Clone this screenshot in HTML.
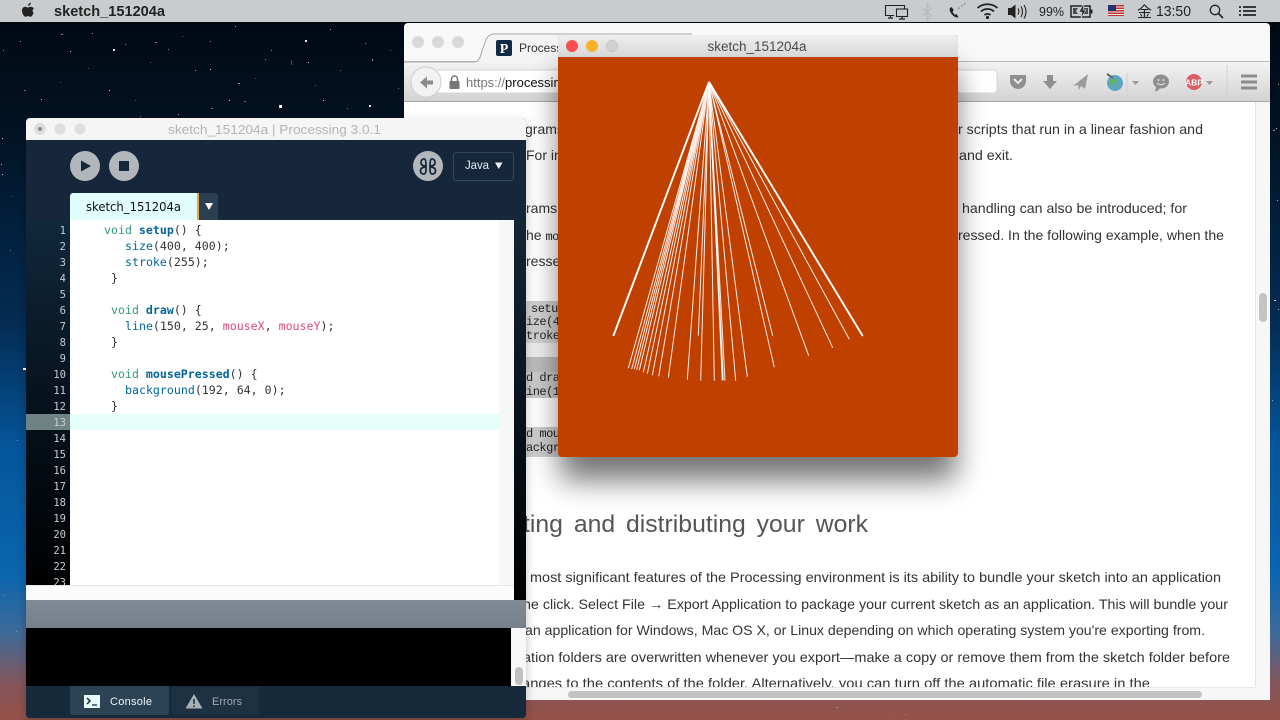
<!DOCTYPE html>
<html><head><meta charset="utf-8"><title>sketch_151204a</title>
<style>
html,body{margin:0;padding:0;width:1280px;height:720px;overflow:hidden;background:#000}
svg{display:block;position:absolute;left:0;top:0}
.s{font-family:"Liberation Sans",sans-serif}
.c{font-family:"DejaVu Sans Mono","Liberation Mono",monospace;font-size:11.6px}
.b{font-family:"Liberation Sans",sans-serif;font-size:14px;fill:#333}
.m{font-family:"Liberation Mono",monospace;font-size:12px;letter-spacing:-.5px;fill:#222}
.n{font-family:"DejaVu Sans Mono",monospace;font-size:10.5px;fill:#c8ccd0;text-anchor:end}
</style></head><body>
<svg width="1280" height="720" viewBox="0 0 1280 720" xmlns="http://www.w3.org/2000/svg">
<defs>
<linearGradient id="bg" x1="0" y1="0" x2="0" y2="1">
<stop offset="0" stop-color="#010710"/><stop offset=".17" stop-color="#021222"/><stop offset=".45" stop-color="#042c54"/><stop offset=".62" stop-color="#05559a"/><stop offset=".8" stop-color="#0b66ae"/><stop offset=".88" stop-color="#3f6a98"/><stop offset=".95" stop-color="#85555c"/><stop offset="1" stop-color="#965247"/>
</linearGradient>
<linearGradient id="tb" x1="0" y1="0" x2="0" y2="1"><stop offset="0" stop-color="#f0f0f0"/><stop offset="1" stop-color="#d6d6d6"/></linearGradient>
<linearGradient id="bt" x1="0" y1="0" x2="0" y2="1"><stop offset="0" stop-color="#f4f4f4"/><stop offset="1" stop-color="#d2d2d2"/></linearGradient>
<linearGradient id="gut" x1="0" y1="0" x2="0" y2="1"><stop offset="0" stop-color="#10283c"/><stop offset=".45" stop-color="#071420"/><stop offset="1" stop-color="#000"/></linearGradient>
<linearGradient id="rs" x1="0" y1="0" x2="0" y2="1"><stop offset="0" stop-color="#122637"/><stop offset="1" stop-color="#000"/></linearGradient>
<linearGradient id="gb" x1="0" y1="0" x2="0" y2="1"><stop offset="0" stop-color="#7f8a94"/><stop offset="1" stop-color="#75808a"/></linearGradient>
<filter id="sb" filterUnits="userSpaceOnUse" x="460" y="0" width="600" height="600"><feGaussianBlur stdDeviation="15"/></filter>
<filter id="sh2" x="-10%" y="-10%" width="120%" height="120%"><feDropShadow dx="0" dy="4" stdDeviation="5" flood-color="#000" flood-opacity=".25"/></filter>
<clipPath id="ed"><rect x="26" y="220" width="473" height="365"/></clipPath>
<clipPath id="bc"><rect x="404" y="102" width="851" height="585"/></clipPath>
</defs>

<!-- desktop -->
<rect width="1280" height="720" fill="url(#bg)"/>
<g fill="#fff">
<rect x="20" y="41" width="1" height="1" opacity=".6"/><rect x="61" y="34" width="2" height="1" opacity=".5"/><rect x="92" y="33" width="1" height="1" opacity=".6"/><rect x="113" y="49" width="2" height="2" opacity=".9"/><rect x="70" y="51" width="1" height="1" opacity=".8"/><rect x="125" y="44" width="1" height="1" opacity=".5"/><rect x="155" y="42" width="2" height="1" opacity=".5"/><rect x="168" y="49" width="1" height="1" opacity=".5"/><rect x="210" y="41" width="1" height="1" opacity=".5"/><rect x="235" y="26" width="1" height="1" opacity=".6"/><rect x="271" y="50" width="1" height="1" opacity=".5"/><rect x="305" y="40" width="2" height="2" opacity=".9"/><rect x="330" y="29" width="1" height="1" opacity=".6"/><rect x="365" y="43" width="1" height="1" opacity=".5"/><rect x="372" y="59" width="1" height="2" opacity=".6"/><rect x="291" y="60" width="1" height="5" opacity=".25"/><rect x="308" y="62" width="1" height="1" opacity=".8"/><rect x="265" y="59" width="1" height="1" opacity=".5"/><rect x="210" y="69" width="1" height="1" opacity=".8"/><rect x="195" y="70" width="1" height="1" opacity=".6"/><rect x="238" y="83" width="2" height="1" opacity=".6"/><rect x="109" y="90" width="1" height="1" opacity=".8"/><rect x="41" y="99" width="1" height="1" opacity=".8"/><rect x="279" y="105" width="3" height="3"/><rect x="229" y="100" width="1" height="1" opacity=".8"/><rect x="244" y="101" width="2" height="1" opacity=".4"/><rect x="323" y="100" width="1" height="1" opacity=".8"/><rect x="369" y="105" width="2" height="2" opacity=".9"/><rect x="347" y="108" width="1" height="1" opacity=".4"/><rect x="211" y="108" width="2" height="1" opacity=".4"/><rect x="178" y="114" width="1" height="1" opacity=".6"/><rect x="140" y="116" width="1" height="1" opacity=".4"/><rect x="24" y="90" width="2" height="1" opacity=".4"/><rect x="3" y="50" width="1" height="1" opacity=".5"/><rect x="2" y="138" width="1" height="1" opacity=".8"/><rect x="1" y="164" width="1" height="1" opacity=".7"/><rect x="2" y="174" width="1" height="1" opacity=".8"/><rect x="23" y="368" width="3" height="2"/><rect x="12" y="196" width="1" height="1" opacity=".3"/><rect x="10" y="250" width="1" height="1" opacity=".4"/><rect x="17" y="440" width="1" height="1" opacity=".4"/><rect x="4" y="595" width="1" height="1" opacity=".4"/><rect x="16" y="631" width="1" height="1" opacity=".3"/>
<rect x="150" y="62" width="1" height="1" opacity=".35"/><rect x="182" y="36" width="1" height="1" opacity=".35"/><rect x="88" y="68" width="1" height="1" opacity=".3"/><rect x="340" y="70" width="1" height="1" opacity=".35"/><rect x="390" y="50" width="1" height="1" opacity=".35"/><rect x="255" y="78" width="1" height="1" opacity=".3"/><rect x="60" y="82" width="1" height="1" opacity=".3"/><rect x="315" y="85" width="1" height="1" opacity=".35"/><rect x="135" y="100" width="1" height="1" opacity=".3"/><rect x="398" y="88" width="1" height="1" opacity=".4"/>
<rect x="1276" y="128" width="1" height="1" opacity=".7"/><rect x="1273" y="130" width="2" height="1" opacity=".5"/><rect x="1277" y="200" width="1" height="1" opacity=".6"/><rect x="1274" y="300" width="2" height="1" opacity=".8"/><rect x="1278" y="309" width="1" height="1" opacity=".7"/><rect x="1272" y="400" width="1" height="1" opacity=".5"/><rect x="1278" y="84" width="1" height="1" opacity=".6"/><rect x="905" y="714" width="1" height="1" opacity=".25"/><rect x="836" y="707" width="2" height="1" opacity=".25"/>
</g>

<!-- menu bar -->
<rect width="1280" height="22" fill="#c9cccf"/>
<rect y="22" width="1280" height="1" fill="#0a0a0a"/>
<path d="M29.600 4.200c.9-.1 1.900-.7 2.300-1.400.1.900-.2 1.900-.8 2.600-.5.600-1.200 1-1.900 1-.1-.9.1-1.600.4-2.200zM34.600 9.500c-1.300.8-1.500 2.800.1 3.800-.5 1.500-2 4-3.200 4-1 0-1.300-.7-2.500-.7s-1.600.7-2.500.7c-1.500 0-3.500-3.200-3.500-6 0-2.600 1.600-4 3.200-4 1.100 0 1.900.7 2.700.7.8 0 1.600-.8 2.900-.8 1 .1 1.900.5 2.800 1.300z" fill="#222" transform="translate(-1 -.5)"/>
<text x="54" y="16" class="s" font-size="14.300" font-weight="700" fill="#222" textLength="111" lengthAdjust="spacingAndGlyphs">sketch_151204a</text>
<g fill="none" stroke="#222" stroke-width="1.100">
<path d="M894 15.500h-8.500v-10h19v3"/><rect x="896.500" y="9" width="11" height="7.500"/><path d="M899 19h6M902 17v2M888 18h5M890.500 16v2" stroke-width="1.300"/>
</g>
<path d="M927 4l4 4-4 4 4 4-4 4V4zM927 12l-4-3.500M927 12l-4 3.500" fill="none" stroke="#b4b8bc" stroke-width="1.200"/>
<path d="M950 8c-1.200 1 .2 5 3 7.500 2 1.800 4 2.500 5.500 1.800l-2-3.300-1.700.7c-1-.8-2-2.300-2.200-3.500l1.300-1L951.500 7z" fill="#222"/>
<path d="M958 9l1.600-1.400M961 6.500l1.600-1.400M964 4.500l1.400-1.200" stroke="#8e9296" stroke-width="1.200" fill="none"/>
<g fill="none" stroke="#222" stroke-width="1.800"><path d="M977.500 8c5.600-5 14.400-5 20 0"/><path d="M981 11.500c3.700-3.300 9.300-3.300 13 0"/><path d="M984.500 15c1.700-1.500 4.300-1.500 6 0"/></g><circle cx="987.500" cy="17.500" r="1.600" fill="#222"/>
<path d="M1008 8h3l4.500-3.500v14L1011 15h-3z" fill="#222"/><path d="M1018 8.500c1.200 1.900 1.200 4.100 0 6M1021 6.500c2 3.200 2 7.300 0 10.500M1024 5c2.600 4.200 2.600 9.300 0 13.500" fill="none" stroke="#222" stroke-width="1.100"/>
<text x="1039" y="16" class="s" font-size="13" fill="#222" textLength="25" lengthAdjust="spacingAndGlyphs">99%</text>
<rect x="1071" y="6" width="19" height="11" fill="none" stroke="#222" stroke-width="1.500"/><rect x="1090.500" y="9.500" width="2" height="4" fill="#222"/><path d="M1073 8h5l-2 3 2 3h-5zM1082 8h6v6h-6z" fill="#222" opacity=".75"/><path d="M1083 5l-4 7h3l-1 6 5-8h-3l1-5z" fill="#222" stroke="#c9cccf" stroke-width=".7"/>
<rect x="1108" y="5" width="16" height="11" fill="#b33"/><path d="M1108 7h16M1108 9.500h16M1108 12h16M1108 14.500h16" stroke="#f0e8e8" stroke-width="1"/><rect x="1108" y="5" width="8" height="6" fill="#2a2f6e"/>
<text x="1137" y="17" font-family="'Noto Sans CJK JP',sans-serif" font-size="15" fill="#222">金</text>
<text x="1156" y="16" class="s" font-size="14.500" fill="#222" textLength="35" lengthAdjust="spacingAndGlyphs">13:50</text>
<circle cx="1215" cy="10" r="4.700" fill="none" stroke="#222" stroke-width="1.300"/><path d="M1218.500 13.500l4.500 4.500" stroke="#222" stroke-width="1.700"/>
<path d="M1239 7h2M1243 7h13M1239 11h2M1243 11h13M1239 15h2M1243 15h13" stroke="#222" stroke-width="1.800"/>

<!-- browser window -->
<path d="M404 27a4 4 0 0 1 4-4h858a4 4 0 0 1 4 4v669a4 4 0 0 1-4 4H408a4 4 0 0 1-4-4z" fill="#f8f8f8"/>
<rect x="404" y="61" width="866" height="41" fill="url(#bt)"/>
<rect x="404" y="101" width="866" height="1" fill="#a8a8a8"/>
<rect x="404" y="61" width="866" height="1" fill="#b9b9b9"/>
<path d="M404 62h70c5 0 6-4 8-11l3-9c2-5 4-8 10-8h197v28z" fill="#f4f4f4"/>
<path d="M404 62h70c5 0 6-4 8-11l3-9c2-5 4-8 10-8h197" fill="none" stroke="#a9a9a9"/>
<circle cx="418" cy="42" r="6" fill="#d9d9d9"/><circle cx="438" cy="42" r="6" fill="#d9d9d9"/><circle cx="458" cy="42" r="6" fill="#d9d9d9"/>
<rect x="496" y="40" width="16" height="16" rx="2" fill="#0f2a45"/><text x="504" y="53" text-anchor="middle" font-family="'Liberation Serif',serif" font-weight="700" font-size="14" fill="#fff">P</text>
<text x="519" y="52" class="s" font-size="12" fill="#333">Processing</text>
<rect x="436" y="70" width="561" height="23" rx="3" fill="#fff" stroke="#d5d5d5"/>
<circle cx="426" cy="82" r="15" fill="#f2f2f2" stroke="#d0d0d0"/><path d="M433 80.500h-6v-4l-7 6 7 6v-4h6z" fill="#8a8a8a"/>
<rect x="449.500" y="81" width="10" height="8" rx="1" fill="#777"/><path d="M451.500 81v-2a3 3 0 0 1 6 0v2" fill="none" stroke="#777" stroke-width="1.500"/>
<text x="466" y="87" class="s" font-size="13" fill="#777">https://<tspan fill="#111">processing.org</tspan></text>
<path d="M1010 75h16v6a8 8 0 0 1-16 0z" fill="#8f8f8f"/><path d="M1014 79l4 4 4-4" fill="none" stroke="#e8e8e8" stroke-width="2"/>
<path d="M1047 75h6v6h4l-7 8-7-8h4z" fill="#8f8f8f"/>
<path d="M1088 74l-3 15-4-3-2 4-1-5-5 1z" fill="#9c9c9c"/>
<circle cx="1115" cy="83" r="8" fill="#5aa6c8"/><path d="M1110 80c3-2 6-2 8 0 1 2-2 4-4 3-2 1-1 4-3 4-2-2-2-5-1-7zM1117 85l3-1-1 4z" fill="#62b36a"/><path d="M1107 74l6 4" stroke="#666" stroke-width="2"/>
<path d="M1127 73v19" stroke="#cfcfcf"/><path d="M1132 81h7l-3.500 4z" fill="#9a9a9a"/>
<ellipse cx="1161" cy="81.500" rx="8" ry="7" fill="#8f8f8f"/><path d="M1156 87l-1 5 5-3z" fill="#8f8f8f"/><path d="M1157 83c2 2.200 6 2.200 8 0" stroke="#ddd" fill="none" stroke-width="1.200"/><circle cx="1158.500" cy="80" r="1" fill="#ddd"/><circle cx="1163.500" cy="80" r="1" fill="#ddd"/>
<circle cx="1194" cy="82" r="8" fill="#d95d64"/><text x="1194" y="85.500" text-anchor="middle" class="s" font-size="8.500" font-weight="700" fill="#fff">ABP</text>
<path d="M1206 81h7l-3.500 4z" fill="#9a9a9a"/>
<path d="M1227 65v32" stroke="#d0d0d0"/>
<path d="M1241 76h16M1241 82h16M1241 88h16" stroke="#8c8c8c" stroke-width="3"/>

<!-- browser content -->
<rect x="404" y="102" width="851" height="585" fill="#fff"/>
<rect x="1255" y="102" width="15" height="598" fill="#f7f7f7"/><rect x="1255" y="102" width="1" height="585" fill="#e3e3e3"/>
<rect x="1259" y="293" width="8" height="29" rx="4" fill="#c3c3c3"/>
<rect x="404" y="687" width="851" height="13" fill="#f7f7f7"/><rect x="404" y="687" width="851" height="1" fill="#e8e8e8"/>
<rect x="568" y="691" width="634" height="7" rx="3.500" fill="#c2c2c2"/>

<g clip-path="url(#bc)">
<text class="b" x="525" y="134">grams</text>
<text class="b" x="526" y="160">For in</text>
<text class="b" x="526" y="213">rams</text>
<text class="b" x="526" y="240">he <tspan class="m" font-size="13">mouse</tspan></text>
<text class="b" x="526" y="266">resse</text>
<text class="b" x="958" y="134" textLength="245" lengthAdjust="spacingAndGlyphs">r scripts that run in a linear fashion and</text>
<text class="b" x="959" y="160" textLength="54" lengthAdjust="spacingAndGlyphs">and exit.</text>
<text class="b" x="962" y="213" textLength="225" lengthAdjust="spacingAndGlyphs">handling can also be introduced; for</text>
<text class="b" x="958" y="240" textLength="266" lengthAdjust="spacingAndGlyphs">ressed. In the following example, when the</text>
<rect x="526" y="301" width="60" height="42" fill="#d0d0d0"/><rect x="526" y="343" width="60" height="14" fill="#ececec"/><rect x="526" y="357" width="60" height="15" fill="#bcbcbc"/><rect x="526" y="372" width="60" height="26" fill="#cacaca"/><rect x="526" y="427" width="60" height="30" fill="#cdcdcd"/>
<text class="m" x="531" y="312">setup</text>
<text class="m" x="526" y="325">ize(400</text>
<text class="m" x="526" y="339">troke</text>
<text class="m" x="526" y="381">d draw</text>
<text class="m" x="526" y="395">ine(150</text>
<text class="m" x="526" y="437">d mouse</text>
<text class="m" x="526" y="451">ackgrou</text>
<text x="523" y="532" class="s" font-size="24.500" fill="#555" word-spacing="4" textLength="345" lengthAdjust="spacingAndGlyphs">ting and distributing your work</text>
<text class="b" x="530" y="582" textLength="691" lengthAdjust="spacingAndGlyphs">most significant features of the Processing environment is its ability to bundle your sketch into an application</text>
<text class="b" x="523" y="609" textLength="705" lengthAdjust="spacingAndGlyphs">ne click. Select File → Export Application to package your current sketch as an application. This will bundle your</text>
<text class="b" x="525" y="635" textLength="680" lengthAdjust="spacingAndGlyphs">an application for Windows, Mac OS X, or Linux depending on which operating system you're exporting from.</text>
<text class="b" x="523" y="662" textLength="707" lengthAdjust="spacingAndGlyphs">ation folders are overwritten whenever you export—make a copy or remove them from the sketch folder before</text>
<text class="b" x="522" y="688" textLength="628" lengthAdjust="spacingAndGlyphs">anges to the contents of the folder. Alternatively, you can turn off the automatic file erasure in the</text>
</g>

<!-- sketch window -->
<rect x="560" y="70" width="396" height="410" rx="4" fill="#000" opacity=".55" filter="url(#sb)"/>
<path d="M558 39a4 4 0 0 1 4-4h392a4 4 0 0 1 4 4v414a4 4 0 0 1-4 4H562a4 4 0 0 1-4-4z" fill="#c04000"/>
<path d="M558 39a4 4 0 0 1 4-4h392a4 4 0 0 1 4 4v18H558z" fill="url(#tb)"/>
<circle cx="572" cy="46" r="6" fill="#fb4f4f"/><circle cx="592" cy="46" r="6" fill="#fbb32e"/><circle cx="612" cy="46" r="6" fill="#d0d0d0" stroke="#bdbdbd" stroke-width=".5"/>
<text x="757" y="51" text-anchor="middle" class="s" font-size="13.500" fill="#4a4a4a">sketch_151204a</text>
<g stroke="#fff" stroke-width="1" fill="none" stroke-opacity=".9">
<path d="M709 82L613.300 336" stroke-width="1.900" stroke-opacity="1"/>
<path d="M709 82L862.700 336" stroke-width="1.900" stroke-opacity="1"/>
<path d="M709 82L628.300 368.300M709 82L631.700 369M709 82L634.300 369.300M709 82L636.700 369.700M709 82L639.300 370.300M709 82L643.300 372.300M709 82L647.300 373.700M709 82L652.300 375.300M709 82L658.700 376.300M709 82L668.300 377.700M709 82L687.300 379.700M709 82L698.300 335.700M709 82L700.700 380.700M709 82L714.300 380.700M709 82L722.300 380.700M709 82L725 380.700M709 82L735.700 380.700M709 82L747.300 376.700M709 82L772.700 335.700M709 82L774.300 367.300M709 82L808.700 355.700M709 82L832.700 347.700M709 82L849.300 339.300"/>
<path d="M709 82L723 380" stroke-width="1.500"/>
</g>

<!-- processing window -->
<g filter="url(#sh2)"><path d="M26 122a4 4 0 0 1 4-4h492a4 4 0 0 1 4 4v592a4 4 0 0 1-4 4H30a4 4 0 0 1-4-4z" fill="#15283a"/></g>
<path d="M26 122a4 4 0 0 1 4-4h492a4 4 0 0 1 4 4v18H26z" fill="#f5f5f5"/>
<circle cx="40" cy="129" r="5.500" fill="#dcdcdc" stroke="#cfcfcf" stroke-width=".5"/><circle cx="40" cy="129" r="2" fill="#8a8a8a"/><circle cx="60" cy="129" r="5.500" fill="#dedede"/><circle cx="80" cy="129" r="5.500" fill="#dedede"/>
<text x="168" y="134" class="s" font-size="13" fill="#b4b4b4" textLength="213" lengthAdjust="spacingAndGlyphs">sketch_151204a | Processing 3.0.1</text>
<circle cx="85" cy="166" r="15" fill="#b2b7bb"/><path d="M81 160.500l10 5.500-10 5.500z" fill="#15283a"/>
<circle cx="124" cy="166" r="15" fill="#b2b7bb"/><rect x="119" y="161" width="10" height="10" fill="#15283a"/>
<circle cx="428" cy="166" r="15" fill="#b2b7bb"/>
<g fill="none" stroke="#15283a" stroke-width="1.700"><path d="M426 166c-3 0-5-1-5-3.500s2-4 3.500-3.500c1 .3 1.500 2 1.500 7zM426 167c-3 0-5.500 1-5.500 4s3 3.500 4.500 2.500c1-.7 1-3 1-6.500zM430 166c3 0 5-1 5-3.500s-2-4-3.500-3.500c-1 .3-1.500 2-1.500 7zM430 167c3 0 5.500 1 5.500 4s-3 3.500-4.500 2.500c-1-.7-1-3-1-6.500z"/></g>
<rect x="453.500" y="152.500" width="60" height="28" rx="3" fill="none" stroke="#2f4a5f"/>
<text x="465" y="169" class="s" font-size="11.500" fill="#e6eaee" textLength="24">Java</text><path d="M495 162.500h7.500l-3.750 6.500z" fill="#eef2f5"/>
<path d="M70 220v-24a3 3 0 0 1 3-3h124v27z" fill="#e0fdfb"/>
<rect x="197" y="193" width="2" height="27" fill="#e5a33c"/>
<path d="M199 193h16a3 3 0 0 1 3 3v24h-19z" fill="#2b3f52"/><path d="M205 203h8l-4 7z" fill="#fff"/>
<text x="86" y="211" font-family="'DejaVu Sans',sans-serif" font-size="12.500" fill="#111" textLength="95" lengthAdjust="spacingAndGlyphs">sketch_151204a</text>

<rect x="26" y="220" width="44" height="365" fill="url(#gut)"/>
<rect x="70" y="220" width="429" height="365" fill="#fff"/>
<rect x="499" y="220" width="15" height="365" fill="#f6f7f7"/>
<rect x="514" y="220" width="12" height="380" fill="url(#rs)"/>
<rect x="26" y="585" width="488" height="15" fill="#fbfbfb"/><rect x="26" y="585" width="488" height="1" fill="#e6e6e6"/>
<rect x="26" y="414" width="44" height="16" fill="#6f8284"/>
<rect x="70" y="414" width="429" height="16" fill="#e6fffb"/>
<g clip-path="url(#ed)">
<text class="n" x="66" y="234">1</text><text class="n" x="66" y="250">2</text><text class="n" x="66" y="266">3</text><text class="n" x="66" y="282">4</text><text class="n" x="66" y="298">5</text><text class="n" x="66" y="314">6</text><text class="n" x="66" y="330">7</text><text class="n" x="66" y="346">8</text><text class="n" x="66" y="362">9</text><text class="n" x="66" y="378">10</text><text class="n" x="66" y="394">11</text><text class="n" x="66" y="410">12</text><text class="n" x="66" y="426">13</text><text class="n" x="66" y="442">14</text><text class="n" x="66" y="458">15</text><text class="n" x="66" y="474">16</text><text class="n" x="66" y="490">17</text><text class="n" x="66" y="506">18</text><text class="n" x="66" y="522">19</text><text class="n" x="66" y="538">20</text><text class="n" x="66" y="554">21</text><text class="n" x="66" y="570">22</text><text class="n" x="66" y="586">23</text>
<g class="c" fill="#333">
<text x="104" y="234" xml:space="preserve"><tspan fill="#33997e">void</tspan> <tspan fill="#006699" font-weight="700">setup</tspan>() {</text>
<text x="125" y="250"><tspan fill="#006699">size</tspan>(400, 400);</text>
<text x="125" y="266"><tspan fill="#006699">stroke</tspan>(255);</text>
<text x="111" y="282">}</text>
<text x="111" y="314" xml:space="preserve"><tspan fill="#33997e">void</tspan> <tspan fill="#006699" font-weight="700">draw</tspan>() {</text>
<text x="125" y="330" xml:space="preserve"><tspan fill="#006699">line</tspan>(150, 25, <tspan fill="#d94a7a">mouseX</tspan>, <tspan fill="#d94a7a">mouseY</tspan>);</text>
<text x="111" y="346">}</text>
<text x="111" y="378" xml:space="preserve"><tspan fill="#33997e">void</tspan> <tspan fill="#006699" font-weight="700">mousePressed</tspan>() {</text>
<text x="125" y="394"><tspan fill="#006699">background</tspan>(192, 64, 0);</text>
<text x="111" y="410">}</text>
</g>
</g>
<rect x="26" y="600" width="500" height="28" fill="url(#gb)"/>
<rect x="26" y="628" width="485" height="58" fill="#000"/>
<rect x="511" y="628" width="15" height="58" fill="#f8f8f8"/>
<rect x="515" y="667" width="8" height="18" rx="4" fill="#c0c0c0"/>
<path d="M26 686h500v28a4 4 0 0 1-4 4H30a4 4 0 0 1-4-4z" fill="#172a3b"/>
<path d="M70 686h99v26a3 3 0 0 1-3 3H73a3 3 0 0 1-3-3z" fill="#2c4255"/>
<path d="M172 686h87v26a3 3 0 0 1-3 3h-81a3 3 0 0 1-3-3z" fill="#1d3143"/>
<rect x="84" y="695" width="16" height="13" fill="#e6fbfa"/><path d="M87 698l3 3-3 3" fill="none" stroke="#172a3b" stroke-width="1.500"/><path d="M92 705h5" stroke="#172a3b" stroke-width="1.300"/>
<text x="110" y="705" class="s" font-size="11" fill="#eef4f6" textLength="42">Console</text>
<path d="M194 694l8.500 14.500h-17z" fill="#a6b0b6"/><path d="M194 699v5M194 705.500v1.500" stroke="#172a3b" stroke-width="1.500"/>
<text x="212" y="705" class="s" font-size="11" fill="#a0aab0" textLength="30">Errors</text>
</svg>
</body></html>
